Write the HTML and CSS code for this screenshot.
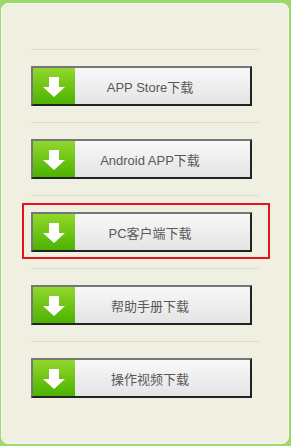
FILE: index.html
```html
<!DOCTYPE html>
<html lang="zh-CN">
<head>
<meta charset="utf-8">
<title>下载</title>
<link rel="stylesheet" href="styles.css">
</head>
<body>
<div class="panel">
  <ul class="list">
    <li class="row"><a class="btn" href="#"><span class="ico"><svg width="22" height="20" viewBox="0 0 22 20"><path d="M6 0h10v10h6L11 20 0 10h6z" fill="#fff"/></svg></span><span class="label">APP Store下载</span></a></li>
    <li class="row"><a class="btn" href="#"><span class="ico"><svg width="22" height="20" viewBox="0 0 22 20"><path d="M6 0h10v10h6L11 20 0 10h6z" fill="#fff"/></svg></span><span class="label">Android APP下载</span></a></li>
    <li class="row active"><a class="btn" href="#"><span class="ico"><svg width="22" height="20" viewBox="0 0 22 20"><path d="M6 0h10v10h6L11 20 0 10h6z" fill="#fff"/></svg></span><span class="label">PC客户端下载</span></a></li>
    <li class="row"><a class="btn" href="#"><span class="ico"><svg width="22" height="20" viewBox="0 0 22 20"><path d="M6 0h10v10h6L11 20 0 10h6z" fill="#fff"/></svg></span><span class="label">帮助手册下载</span></a></li>
    <li class="row"><a class="btn" href="#"><span class="ico"><svg width="22" height="20" viewBox="0 0 22 20"><path d="M6 0h10v10h6L11 20 0 10h6z" fill="#fff"/></svg></span><span class="label">操作视频下载</span></a></li>
  </ul>
</div>
</body>
</html>
```
FILE: styles.css
```css
html, body {
  margin: 0;
  padding: 0;
  background: #9cd96c;
  height: 446px;
  overflow: hidden;
}
body {
  padding: 3px 2px 2px 1px;
  box-sizing: border-box;
  font-family: "Liberation Sans", Arial, "Noto Sans CJK SC", sans-serif;
}
.panel {
  box-sizing: border-box;
  height: 441px;
  background: #f0f0e2;
  border: 1px solid #f7f7ee;
  border-radius: 7px;
  padding: 45px 29px 0 29px;
}
.list {
  list-style: none;
  margin: 0;
  padding: 0;
}
.row {
  position: relative;
  border-top: 1px solid #dcdccc;
  padding: 16px 0;
}
.row.active::before {
  content: "";
  position: absolute;
  left: -9px;
  top: 7px;
  width: 244px;
  height: 52px;
  border: 2px solid #e8121c;
  pointer-events: none;
}
.btn {
  display: flex;
  box-sizing: border-box;
  width: 221px;
  height: 40px;
  border-style: solid;
  border-width: 2px;
  border-color: #767676 #222 #222 #767676;
  text-decoration: none;
  background: linear-gradient(#f8f8f8, #e4e4e4);
}
.ico {
  flex: none;
  width: 42px;
  display: flex;
  align-items: center;
  justify-content: center;
  background: linear-gradient(#92d72c, #4cb300);
}
.ico svg {
  display: block;
  margin-top: 1px;
}
.label {
  flex: 1;
  display: flex;
  align-items: center;
  justify-content: center;
  padding: 1px 25px 0 0;
  font-size: 13px;
  color: #595959;
}
```
